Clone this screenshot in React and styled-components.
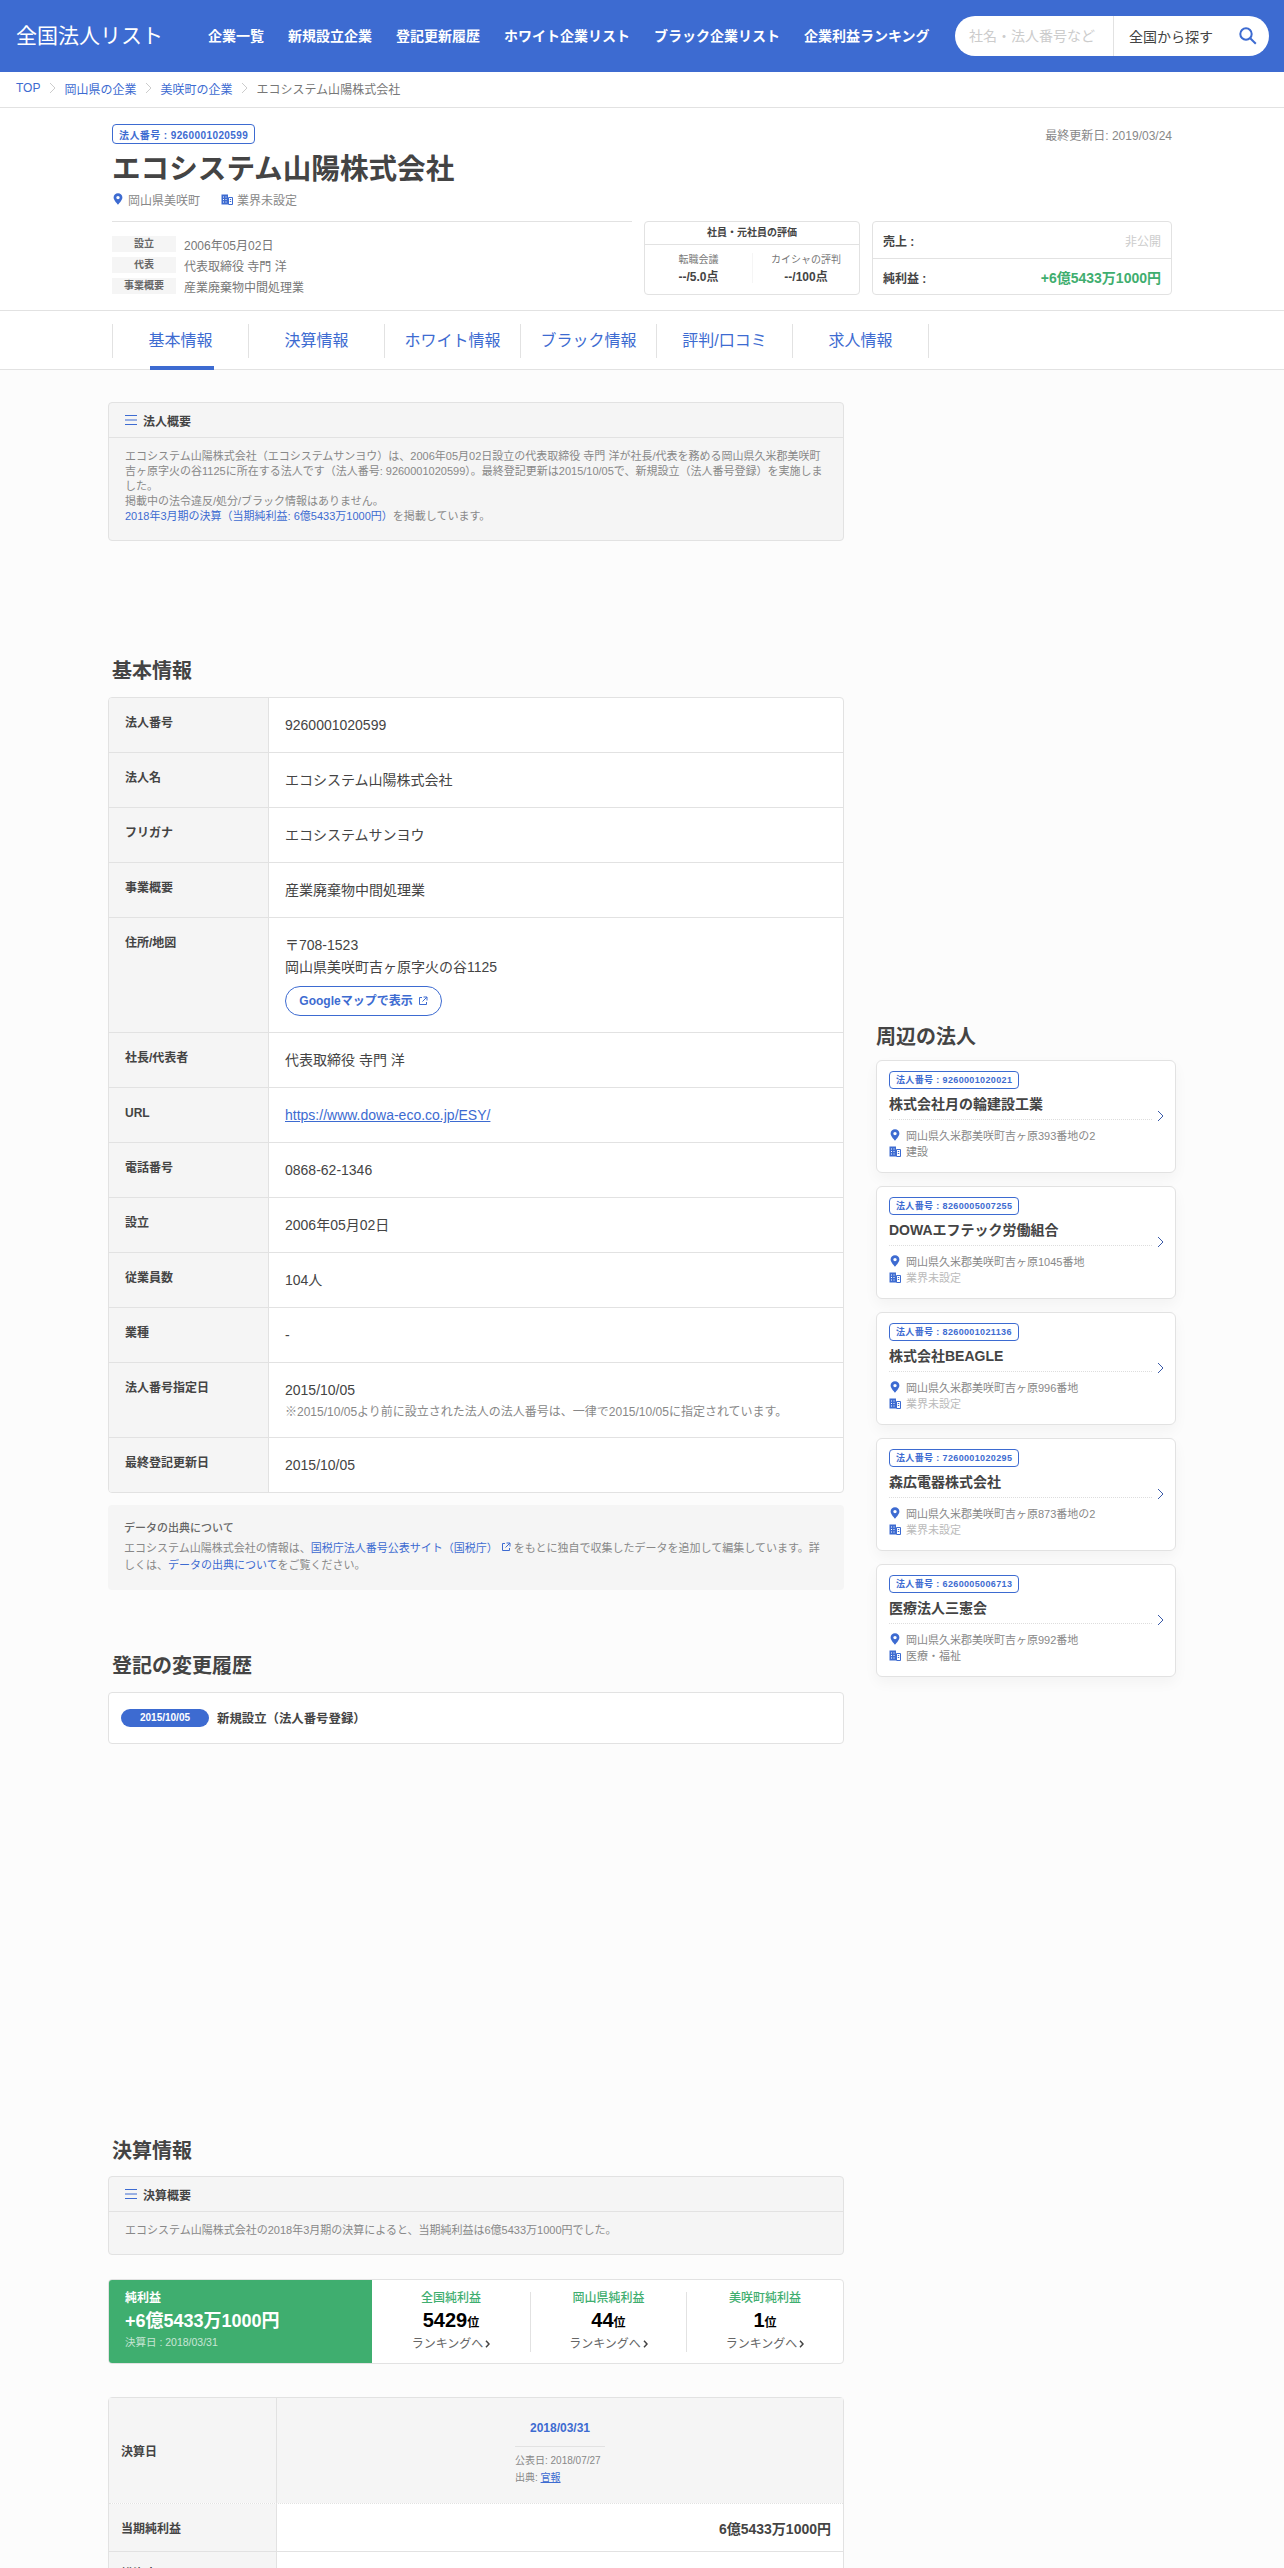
import React from "react";
import styled, { createGlobalStyle } from "styled-components";

const BLUE = "#3d6bd1";
const GREEN = "#3fae6f";
const LINE = "#e2e2e2";
const SOFT = "#f5f5f5";

const GlobalStyle = createGlobalStyle`
  html, body {
    margin: 0;
    padding: 0;
    background: #fcfcfc;
    color: #444;
    font-family: "Liberation Sans", "Noto Sans CJK JP", sans-serif;
  }
  * { box-sizing: border-box; }
  a { color: ${BLUE}; text-decoration: none; }
`;

const Page = styled.div`
  width: 1284px;
  height: 2568px;
  overflow: hidden;
`;

/* header */
const Header = styled.header`
  height: 72px;
  background: ${BLUE};
  display: flex;
  align-items: center;
  padding: 0 15px 0 16px;
`;
const Logo = styled.div`
  width: 192px;
  font-size: 21px;
  line-height: 24px;
  font-weight: 400;
  color: #fff;
`;
const Nav = styled.nav`
  display: flex;
  gap: 24px;
  flex: 1;
  padding-bottom: 1px;
`;
const NavItem = styled.a`
  color: #fff;
  font-size: 14px;
  font-weight: 700;
  line-height: 20px;
`;
const Search = styled.div`
  width: 314px;
  height: 40px;
  border-radius: 20px;
  background: #fff;
  display: flex;
  align-items: center;
  font-size: 14px;
`;
const Placeholder = styled.div`
  width: 159px;
  height: 100%;
  padding-left: 14px;
  line-height: 40px;
  color: #ccc;
  white-space: nowrap;
  overflow: hidden;
  border-right: 1px solid ${LINE};
`;
const AreaSelect = styled.div`
  flex: 1;
  display: flex;
  align-items: center;
  justify-content: space-between;
  padding: 0 11px 0 15px;
  color: #444;
`;

/* breadcrumb */
const Crumbs = styled.div`
  height: 36px;
  background: #fff;
  border-bottom: 1px solid ${LINE};
  display: flex;
  align-items: center;
  padding: 0 16px 3px;
  font-size: 12px;
  color: #777;
`;
const CrumbSep = styled.svg`
  width: 7px;
  height: 12px;
  margin: 0 8px 0 9px;
  fill: none;
  stroke: #ccc;
`;

/* hero */
const Hero = styled.section`
  height: 203px;
  background: #fff;
  border-bottom: 1px solid ${LINE};
  padding: 16px 112px 0;
`;
const HeroTop = styled.div`
  display: flex;
  justify-content: space-between;
  align-items: center;
`;
const Updated = styled.div`
  font-size: 12px;
  color: #888;
`;
const NumberTag = styled.div`
  display: inline-flex;
  align-items: center;
  height: ${(p) => (p.$small ? "18px" : "20px")};
  padding: 0 6px;
  border: 1px solid ${BLUE};
  border-radius: 4px;
  color: ${BLUE};
  font-size: ${(p) => (p.$small ? "9px" : "10px")};
  font-weight: 700;
  letter-spacing: ${(p) => (p.$small ? "0.36px" : "0.4px")};
  white-space: nowrap;
`;
const Title = styled.h1`
  margin: 9px 0 0;
  font-size: 28.6px;
  line-height: 32px;
  font-weight: 700;
  color: #444;
`;
const HeroMeta = styled.div`
  display: flex;
  align-items: center;
  height: 18px;
  margin-top: 5px;
  font-size: 12px;
  color: #888;
`;
const MetaPart = styled.span`
  display: inline-flex;
  align-items: center;
  gap: 4px;
  margin-right: 21px;
`;
const HeroColumns = styled.div`
  display: flex;
  margin-top: 13px;
`;
const HeroFacts = styled.div`
  width: 520px;
  height: 73px;
  border-top: 1px solid ${LINE};
  padding-top: 14px;
  display: flex;
  flex-direction: column;
  gap: 5px;
`;
const Fact = styled.div`
  display: flex;
  align-items: center;
  height: 16px;
  gap: 8px;
  font-size: 12px;
  color: #777;
`;
const FactLabel = styled.span`
  width: 64px;
  height: 16px;
  line-height: 16px;
  text-align: center;
  background: ${SOFT};
  font-size: 10px;
  font-weight: 700;
  color: #666;
`;
const RatingCard = styled.div`
  width: 216px;
  height: 74px;
  margin-left: 12px;
  border: 1px solid ${LINE};
  border-radius: 4px;
  background: #fff;
`;
const RatingHead = styled.div`
  height: 23px;
  line-height: 22px;
  text-align: center;
  font-size: 10px;
  font-weight: 700;
  border-bottom: 1px solid ${LINE};
  color: #444;
`;
const RatingBody = styled.div`
  display: grid;
  grid-template-columns: 1fr 1fr;
  padding-top: 8px;
`;
const RatingCol = styled.div`
  height: 30px;
  text-align: center;
  font-size: 10px;
  line-height: 14px;
  color: #777;
  & + & { border-left: 1px solid ${SOFT}; }
`;
const RatingValue = styled.div`
  margin-top: 3px;
  font-size: 12px;
  font-weight: 700;
  color: #444;
`;
const MoneyCard = styled.div`
  width: 300px;
  height: 74px;
  margin-left: 12px;
  border: 1px solid ${LINE};
  border-radius: 4px;
  background: #fff;
`;
const MoneyRow = styled.div`
  height: ${(p) => (p.$first ? "36px" : "37px")};
  display: flex;
  align-items: center;
  justify-content: space-between;
  padding: 0 10px;
  font-size: 12px;
  font-weight: 700;
  & + & { border-top: 1px solid ${LINE}; }
`;
const MoneyValue = styled.span`
  font-size: ${(p) => (p.$muted ? "12px" : "14px")};
  font-weight: ${(p) => (p.$muted ? 400 : 700)};
  color: ${(p) => (p.$muted ? "#ccc" : GREEN)};
`;

/* tabs */
const TabBar = styled.div`
  height: 59px;
  background: #fff;
  border-bottom: 1px solid ${LINE};
  padding: 13px 112px 0;
  display: flex;
  align-items: flex-start;
`;
const Tab = styled.a`
  position: relative;
  width: 136px;
  height: 34px;
  line-height: 34px;
  text-align: center;
  font-size: 16px;
  color: ${BLUE};
  border-left: 1px solid ${LINE};
  &:last-child { width: 137px; border-right: 1px solid ${LINE}; }
  ${(p) =>
    p.$active &&
    `&::after {
      content: "";
      position: absolute;
      left: 37px;
      bottom: -12px;
      width: 64px;
      height: 4px;
      background: ${BLUE};
    }`}
`;

/* layout */
const Content = styled.div`
  display: grid;
  grid-template-columns: 736px 300px;
  column-gap: 32px;
  padding: 32px 0 0 108px;
`;
const MainCol = styled.main`
  display: flex;
  flex-direction: column;
`;
const SideCol = styled.aside`
  margin-top: 621px;
`;
const Heading = styled.h2`
  margin: ${(p) => p.$top || 0}px 0 ${(p) => p.$bottom || 13}px;
  padding-left: ${(p) => (p.$flush ? 0 : 4)}px;
  font-size: 20px;
  line-height: 28px;
  font-weight: 700;
  color: #444;
`;

/* summary panel */
const Panel = styled.section`
  background: ${SOFT};
  border: 1px solid ${LINE};
  border-radius: 4px;
`;
const PanelHead = styled.div`
  height: 35px;
  display: flex;
  align-items: center;
  gap: 6px;
  padding: 0 16px;
  border-bottom: 1px solid ${LINE};
  font-size: 12px;
  font-weight: 700;
  color: #444;
`;
const PanelBody = styled.div`
  padding: 11px 16px 16px;
  font-size: 11px;
  line-height: 15px;
  color: #888;
`;
const MenuIcon = styled.svg`
  width: 12px;
  height: 10px;
  stroke: ${BLUE};
  fill: none;
`;

/* basic info table */
const InfoTable = styled.div`
  background: #fff;
  border: 1px solid ${LINE};
  border-radius: 4px;
  overflow: hidden;
`;
const InfoRow = styled.div`
  display: grid;
  grid-template-columns: 160px 1fr;
  min-height: ${(p) => p.$height || 55}px;
  border-bottom: 1px solid ${LINE};
  &:last-child { border-bottom: none; min-height: 54px; }
`;
const InfoLabel = styled.div`
  background: ${SOFT};
  border-right: 1px solid ${LINE};
  padding: 16px 0 0 16px;
  font-size: 12px;
  line-height: 18px;
  font-weight: 700;
  color: #444;
`;
const InfoValue = styled.div`
  padding: 16px 0 0 16px;
  font-size: 14px;
  line-height: 22px;
  color: #444;
`;
const ValueLink = styled.a`
  text-decoration: underline;
`;
const MapButton = styled.a`
  display: inline-flex;
  align-items: center;
  justify-content: center;
  gap: 5px;
  width: 157px;
  height: 30px;
  margin-top: 8px;
  border: 1px solid ${BLUE};
  border-radius: 15px;
  font-size: 12px;
  font-weight: 700;
`;
const SmallNote = styled.div`
  font-size: 12px;
  line-height: 22px;
  color: #888;
`;
const SourceBox = styled.div`
  height: 85px;
  margin-top: 12px;
  padding: 15px 16px 0;
  background: ${SOFT};
  border-radius: 4px;
  font-size: 11px;
  line-height: 17px;
  color: #888;
`;
const SourceTitle = styled.div`
  margin-bottom: 3px;
  font-weight: 500;
  color: #666;
`;

/* history */
const HistoryCard = styled.div`
  height: 52px;
  display: flex;
  align-items: center;
  gap: 8px;
  padding: 0 12px;
  background: #fff;
  border: 1px solid ${LINE};
  border-radius: 4px;
  font-size: 12.4px;
  font-weight: 700;
`;
const DatePill = styled.span`
  width: 88px;
  height: 18px;
  line-height: 18px;
  border-radius: 9px;
  text-align: center;
  background: ${BLUE};
  color: #fff;
  font-size: 10px;
`;

/* profit strip */
const ProfitStrip = styled.div`
  height: 85px;
  margin-top: 24px;
  display: flex;
  background: #fff;
  border: 1px solid ${LINE};
  border-radius: 4px;
  overflow: hidden;
`;
const ProfitBox = styled.div`
  width: 263px;
  background: ${GREEN};
  color: #fff;
  padding: 10px 16px 0;
`;
const ProfitLabel = styled.div`
  font-size: 12px;
  line-height: 16px;
  font-weight: 700;
`;
const ProfitValue = styled.div`
  font-size: 18px;
  line-height: 24px;
  margin-top: 3px;
  font-weight: 700;
`;
const ProfitDate = styled.div`
  font-size: 10.5px;
  line-height: 14px;
  margin-top: 2px;
  opacity: 0.7;
`;
const RankList = styled.div`
  flex: 1;
  display: grid;
  grid-template-columns: 158px 156px 157px;
  padding-top: 12px;
`;
const RankItem = styled.div`
  height: 60px;
  text-align: center;
  & + & { border-left: 1px solid ${LINE}; }
`;
const RankTitle = styled.div`
  margin-top: -3px;
  font-size: 12px;
  line-height: 18px;
  color: ${GREEN};
  font-weight: 500;
`;
const RankNumber = styled.div`
  font-size: 20px;
  line-height: 24px;
  margin-top: 1px;
  font-weight: 700;
  color: #000;
  span { font-size: 12px; }
`;
const RankMore = styled.a`
  display: flex;
  align-items: center;
  justify-content: center;
  gap: 2px;
  margin-top: 1px;
  font-size: 12px;
  line-height: 16px;
  color: #666;
`;

/* finance table */
const FinanceTable = styled.div`
  margin-top: 33px;
  background: #fff;
  border: 1px solid ${LINE};
  border-radius: 4px;
`;
const FinanceRow = styled.div`
  display: grid;
  grid-template-columns: 168px 1fr;
  min-height: ${(p) => p.$height}px;
  border-bottom: 1px ${(p) => (p.$dotted ? "dotted" : "solid")} ${LINE};
`;
const FinanceLabel = styled.div`
  display: flex;
  align-items: center;
  padding-left: 12px;
  background: ${SOFT};
  border-right: 1px solid ${LINE};
  font-size: 12px;
  font-weight: 700;
  color: #444;
`;
const FinanceHead = styled.div`
  background: ${SOFT};
  display: flex;
  flex-direction: column;
  align-items: center;
  padding-top: 21px;
`;
const FinanceDate = styled.div`
  font-size: 12px;
  line-height: 18px;
  font-weight: 700;
  color: ${BLUE};
`;
const FinanceSource = styled.div`
  width: 90px;
  margin-top: 9px;
  padding-top: 6px;
  border-top: 1px solid ${LINE};
  font-size: 10px;
  line-height: 16.5px;
  color: #888;
  a { text-decoration: underline; }
`;
const FinanceValue = styled.div`
  display: flex;
  align-items: center;
  justify-content: flex-end;
  padding-right: 12px;
  font-size: 14px;
  font-weight: 700;
  color: #444;
`;

/* sidebar cards */
const CompanyCard = styled.a`
  position: relative;
  display: block;
  height: 113px;
  margin-bottom: 13px;
  padding: 8px 12px 0;
  background: #fff;
  border: 1px solid ${LINE};
  border-radius: 6px;
  box-shadow: 0 6px 14px rgba(0, 0, 0, 0.04);
`;
const CompanyName = styled.div`
  margin-top: 5px;
  height: 26px;
  font-size: 14px;
  line-height: 20px;
  font-weight: 700;
  color: #444;
  border-bottom: 1px dotted #ddd;
  width: 263px;
`;
const CompanyMeta = styled.div`
  display: flex;
  align-items: center;
  gap: 5px;
  height: 16px;
  margin-top: ${(p) => (p.$first ? "7px" : "0")};
  font-size: 11px;
  color: ${(p) => (p.$muted ? "#bbb" : "#888")};
`;
const CardArrow = styled.svg`
  position: absolute;
  right: 11px;
  top: 49px;
  width: 7px;
  height: 12px;
  fill: none;
  stroke: #3a5aa8;
`;

const PinIcon = () => (
  <svg width="12" height="12" viewBox="0 0 12 12">
    <path
      d="M6 .3C3.500.3 1.600 2.200 1.600 4.600c0 2.900 4.400 7.100 4.400 7.100s4.400-4.200 4.400-7.100C10.400 2.200 8.500.3 6 .3zm0 6a1.700 1.700 0 1 1 0-3.400 1.700 1.700 0 0 1 0 3.400z"
      fill={BLUE}
    />
  </svg>
);

const BuildingIcon = () => (
  <svg width="12" height="12" viewBox="0 0 12 12">
    <path d="M.5 1.500h6.500V11.500H.5z" fill={BLUE} />
    <path d="M7.500 4.500h4V11.500h-4z" fill="none" stroke={BLUE} />
    <path d="M2 3.500h1v1H2zM4.500 3.500h1v1h-1zM2 6h1v1H2zM4.500 6h1v1h-1zM2 8.500h1v1H2zM4.500 8.500h1v1h-1z" fill="#fff" />
    <path d="M8.800 6.500h1.400M8.800 8.500h1.400" stroke={BLUE} fill="none" />
  </svg>
);

const ExternalIcon = () => (
  <svg width="10" height="10" viewBox="0 0 10 10" fill="none" stroke={BLUE}>
    <path d="M4 1.500H1.500v7h7V6M5.500 1h3.500v3.500M9 1 4.500 5.500" />
  </svg>
);

const SearchIcon = () => (
  <svg width="20" height="20" viewBox="0 0 20 20" fill="none" stroke={BLUE} strokeWidth="2">
    <circle cx="8" cy="8" r="5.700" />
    <path d="m12.200 12.200 5.600 5.600" />
  </svg>
);

const Menu = () => (
  <MenuIcon viewBox="0 0 12 10">
    <path d="M0 .5h12M0 5h12M0 9.500h12" />
  </MenuIcon>
);

const SmallChevron = () => (
  <svg width="5" height="8" viewBox="0 0 5 8" fill="none" stroke="#444" strokeWidth="1.500">
    <path d="m1 .8 3 3.200-3 3.200" />
  </svg>
);

const navItems = ["企業一覧", "新規設立企業", "登記更新履歴", "ホワイト企業リスト", "ブラック企業リスト", "企業利益ランキング"];
const tabs = ["基本情報", "決算情報", "ホワイト情報", "ブラック情報", "評判/口コミ", "求人情報"];

const neighbours = [
  { no: "9260001020021", name: "株式会社月の輪建設工業", addr: "岡山県久米郡美咲町吉ヶ原393番地の2", kind: "建設" },
  { no: "8260005007255", name: "DOWAエフテック労働組合", addr: "岡山県久米郡美咲町吉ヶ原1045番地", kind: "業界未設定", muted: true },
  { no: "8260001021136", name: "株式会社BEAGLE", addr: "岡山県久米郡美咲町吉ヶ原996番地", kind: "業界未設定", muted: true },
  { no: "7260001020295", name: "森広電器株式会社", addr: "岡山県久米郡美咲町吉ヶ原873番地の2", kind: "業界未設定", muted: true },
  { no: "6260005006713", name: "医療法人三憲会", addr: "岡山県久米郡美咲町吉ヶ原992番地", kind: "医療・福祉" },
];

const ranks = [
  { title: "全国純利益", rank: "5429" },
  { title: "岡山県純利益", rank: "44" },
  { title: "美咲町純利益", rank: "1" },
];

export default function App() {
  return (
    <Page>
      <GlobalStyle />
      <Header>
        <Logo>全国法人リスト</Logo>
        <Nav>
          {navItems.map((item) => (
            <NavItem key={item}>{item}</NavItem>
          ))}
        </Nav>
        <Search>
          <Placeholder>社名・法人番号など</Placeholder>
          <AreaSelect>
            全国から探す
            <SearchIcon />
          </AreaSelect>
        </Search>
      </Header>

      <Crumbs>
        <a>TOP</a>
        <CrumbSep viewBox="0 0 7 12"><path d="m1 1 5 5-5 5" /></CrumbSep>
        <a>岡山県の企業</a>
        <CrumbSep viewBox="0 0 7 12"><path d="m1 1 5 5-5 5" /></CrumbSep>
        <a>美咲町の企業</a>
        <CrumbSep viewBox="0 0 7 12"><path d="m1 1 5 5-5 5" /></CrumbSep>
        <span>エコシステム山陽株式会社</span>
      </Crumbs>

      <Hero>
        <HeroTop>
          <NumberTag>法人番号 : 9260001020599</NumberTag>
          <Updated>最終更新日: 2019/03/24</Updated>
        </HeroTop>
        <Title>エコシステム山陽株式会社</Title>
        <HeroMeta>
          <MetaPart><PinIcon />岡山県美咲町</MetaPart>
          <MetaPart><BuildingIcon />業界未設定</MetaPart>
        </HeroMeta>
        <HeroColumns>
          <HeroFacts>
            <Fact><FactLabel>設立</FactLabel>2006年05月02日</Fact>
            <Fact><FactLabel>代表</FactLabel>代表取締役 寺門 洋</Fact>
            <Fact><FactLabel>事業概要</FactLabel>産業廃棄物中間処理業</Fact>
          </HeroFacts>
          <RatingCard>
            <RatingHead>社員・元社員の評価</RatingHead>
            <RatingBody>
              <RatingCol>転職会議<RatingValue>--/5.0点</RatingValue></RatingCol>
              <RatingCol>カイシャの評判<RatingValue>--/100点</RatingValue></RatingCol>
            </RatingBody>
          </RatingCard>
          <MoneyCard>
            <MoneyRow $first>売上 :<MoneyValue $muted>非公開</MoneyValue></MoneyRow>
            <MoneyRow>純利益 :<MoneyValue>+6億5433万1000円</MoneyValue></MoneyRow>
          </MoneyCard>
        </HeroColumns>
      </Hero>

      <TabBar>
        {tabs.map((tab, i) => (
          <Tab key={tab} $active={i === 0}>{tab}</Tab>
        ))}
      </TabBar>

      <Content>
        <MainCol>
          <Panel>
            <PanelHead><Menu />法人概要</PanelHead>
            <PanelBody>
              エコシステム山陽株式会社（エコシステムサンヨウ）は、2006年05月02日設立の代表取締役 寺門 洋が社長/代表を務める岡山県久米郡美咲町吉ヶ原字火の谷1125に所在する法人です（法人番号: 9260001020599）。最終登記更新は2015/10/05で、新規設立（法人番号登録）を実施しました。
              <br />
              掲載中の法令違反/処分/ブラック情報はありません。
              <br />
              <a>2018年3月期の決算（当期純利益: 6億5433万1000円）</a>を掲載しています。
            </PanelBody>
          </Panel>

          <Heading $top={116} $bottom={12}>基本情報</Heading>
          <InfoTable>
            <InfoRow><InfoLabel>法人番号</InfoLabel><InfoValue>9260001020599</InfoValue></InfoRow>
            <InfoRow><InfoLabel>法人名</InfoLabel><InfoValue>エコシステム山陽株式会社</InfoValue></InfoRow>
            <InfoRow><InfoLabel>フリガナ</InfoLabel><InfoValue>エコシステムサンヨウ</InfoValue></InfoRow>
            <InfoRow><InfoLabel>事業概要</InfoLabel><InfoValue>産業廃棄物中間処理業</InfoValue></InfoRow>
            <InfoRow $height={115}>
              <InfoLabel>住所/地図</InfoLabel>
              <InfoValue>
                〒708-1523
                <br />
                岡山県美咲町吉ヶ原字火の谷1125
                <br />
                <MapButton>Googleマップで表示 <ExternalIcon /></MapButton>
              </InfoValue>
            </InfoRow>
            <InfoRow><InfoLabel>社長/代表者</InfoLabel><InfoValue>代表取締役 寺門 洋</InfoValue></InfoRow>
            <InfoRow><InfoLabel>URL</InfoLabel><InfoValue><ValueLink>https://www.dowa-eco.co.jp/ESY/</ValueLink></InfoValue></InfoRow>
            <InfoRow><InfoLabel>電話番号</InfoLabel><InfoValue>0868-62-1346</InfoValue></InfoRow>
            <InfoRow><InfoLabel>設立</InfoLabel><InfoValue>2006年05月02日</InfoValue></InfoRow>
            <InfoRow><InfoLabel>従業員数</InfoLabel><InfoValue>104人</InfoValue></InfoRow>
            <InfoRow><InfoLabel>業種</InfoLabel><InfoValue>-</InfoValue></InfoRow>
            <InfoRow $height={75}>
              <InfoLabel>法人番号指定日</InfoLabel>
              <InfoValue>
                2015/10/05
                <SmallNote>※2015/10/05より前に設立された法人の法人番号は、一律で2015/10/05に指定されています。</SmallNote>
              </InfoValue>
            </InfoRow>
            <InfoRow><InfoLabel>最終登記更新日</InfoLabel><InfoValue>2015/10/05</InfoValue></InfoRow>
          </InfoTable>
          <SourceBox>
            <SourceTitle>データの出典について</SourceTitle>
            エコシステム山陽株式会社の情報は、<a>国税庁法人番号公表サイト（国税庁） <ExternalIcon /></a> をもとに独自で収集したデータを追加して編集しています。詳しくは、<a>データの出典について</a>をご覧ください。
          </SourceBox>

          <Heading $top={62} $bottom={12}>登記の変更履歴</Heading>
          <HistoryCard>
            <DatePill>2015/10/05</DatePill>
            新規設立（法人番号登録）
          </HistoryCard>

          <Heading $top={393} $bottom={11}>決算情報</Heading>
          <Panel>
            <PanelHead><Menu />決算概要</PanelHead>
            <PanelBody>エコシステム山陽株式会社の2018年3月期の決算によると、当期純利益は6億5433万1000円でした。</PanelBody>
          </Panel>

          <ProfitStrip>
            <ProfitBox>
              <ProfitLabel>純利益</ProfitLabel>
              <ProfitValue>+6億5433万1000円</ProfitValue>
              <ProfitDate>決算日 : 2018/03/31</ProfitDate>
            </ProfitBox>
            <RankList>
              {ranks.map((r) => (
                <RankItem key={r.title}>
                  <RankTitle>{r.title}</RankTitle>
                  <RankNumber>{r.rank}<span>位</span></RankNumber>
                  <RankMore>ランキングへ <SmallChevron /></RankMore>
                </RankItem>
              ))}
            </RankList>
          </ProfitStrip>

          <FinanceTable>
            <FinanceRow $height={106} $dotted>
              <FinanceLabel>決算日</FinanceLabel>
              <FinanceHead>
                <FinanceDate>2018/03/31</FinanceDate>
                <FinanceSource>
                  公表日: 2018/07/27
                  <br />
                  出典: <a>官報</a>
                </FinanceSource>
              </FinanceHead>
            </FinanceRow>
            <FinanceRow $height={48}>
              <FinanceLabel>当期純利益</FinanceLabel>
              <FinanceValue>6億5433万1000円</FinanceValue>
            </FinanceRow>
            <FinanceRow $height={42}>
              <FinanceLabel>総資産</FinanceLabel>
              <FinanceValue />
            </FinanceRow>
          </FinanceTable>
        </MainCol>

        <SideCol>
          <Heading $flush $bottom={9}>周辺の法人</Heading>
          {neighbours.map((c) => (
            <CompanyCard key={c.no}>
              <NumberTag $small>法人番号 : {c.no}</NumberTag>
              <CompanyName>{c.name}</CompanyName>
              <CompanyMeta $first><PinIcon />{c.addr}</CompanyMeta>
              <CompanyMeta $muted={c.muted}><BuildingIcon />{c.kind}</CompanyMeta>
              <CardArrow viewBox="0 0 7 12"><path d="m1 1 5 5-5 5" /></CardArrow>
            </CompanyCard>
          ))}
        </SideCol>
      </Content>
    </Page>
  );
}
